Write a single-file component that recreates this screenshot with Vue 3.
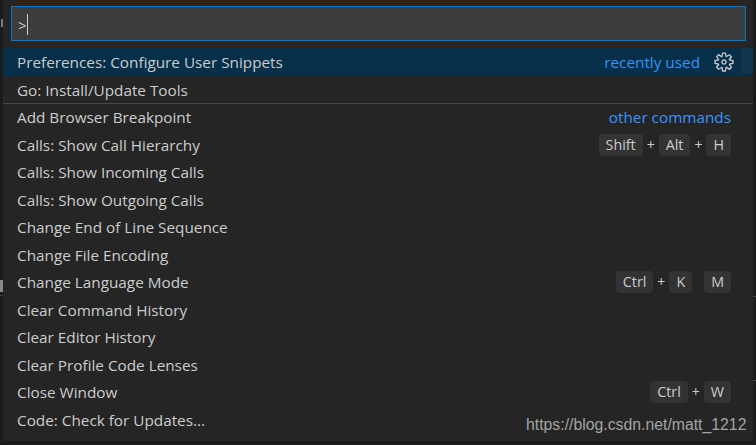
<script setup>
const rows = [
  { t: 'Preferences: Configure User Snippets', active: true, label: 'recently used', gear: true },
  { t: 'Go: Install/Update Tools' },
  { t: 'Add Browser Breakpoint', sep: true, label: 'other commands' },
  { t: 'Calls: Show Call Hierarchy', keys: [['Shift', 'Alt', 'H']] },
  { t: 'Calls: Show Incoming Calls' },
  { t: 'Calls: Show Outgoing Calls' },
  { t: 'Change End of Line Sequence' },
  { t: 'Change File Encoding' },
  { t: 'Change Language Mode', keys: [['Ctrl', 'K'], ['M']] },
  { t: 'Clear Command History' },
  { t: 'Clear Editor History' },
  { t: 'Clear Profile Code Lenses' },
  { t: 'Close Window', keys: [['Ctrl', 'W']] },
  { t: 'Code: Check for Updates...' }
]
</script>

<template>
  <div class="page">
    <i class="edge edge-a"></i>
    <i class="edge edge-c"></i>
    <i class="edge edge-d"></i>
    <i class="edge edge-e"></i>
    <i class="edge edge-f"></i>
    <div class="panel">
      <div class="head">
        <div class="input"><span class="prompt">&gt;</span><span class="caret"></span></div>
      </div>
      <div class="list">
        <div v-for="r in rows" :key="r.t" class="row" :class="{ active: r.active, sep: r.sep }">
          <span class="title">{{ r.t }}</span>
          <span v-if="r.label" class="label">{{ r.label }}</span>
          <svg v-if="r.gear" class="gear" viewBox="0 0 16 16" width="22" height="22">
            <path fill="#c5c5c5" fill-rule="evenodd" d="M9.1 4.4L8.6 2H7.4l-.5 2.4-.7.3-2-1.3-.9.8 1.3 2-.2.7-2.4.5v1.2l2.4.5.3.8-1.3 2 .8.8 2-1.3.8.3.4 2.3h1.2l.5-2.4.8-.3 2 1.3.8-.8-1.3-2 .3-.8 2.3-.4V7.4l-2.4-.5-.3-.8 1.3-2-.8-.8-2 1.3-.7-.2zM9.4 1l.5 2.4L12 2.1l2 2-1.4 2.1 2.4.4v2.8l-2.4.5L14 12l-2 2-2.1-1.4-.5 2.4H6.6l-.5-2.4L4 13.9l-2-2 1.4-2.1L1 9.4V6.6l2.4-.5L2.1 4l2-2 2.1 1.4.4-2.4h2.8zm.6 7c0 1.1-.9 2-2 2s-2-.9-2-2 .9-2 2-2 2 .9 2 2zM8 9c.6 0 1-.4 1-1s-.4-1-1-1-1 .4-1 1 .4 1 1 1z"/>
          </svg>
          <div v-if="r.keys" class="chords">
            <div v-for="(c, i) in r.keys" :key="i" class="chord">
              <template v-for="(k, j) in c" :key="k">
                <span v-if="j > 0" class="plus">+</span>
                <kbd class="key">{{ k }}</kbd>
              </template>
            </div>
          </div>
        </div>
      </div>
      <i class="slider"></i>
    </div>
    <span class="mark">https://blog.csdn.net/matt_1212</span>
  </div>
</template>

<style>
html, body { margin: 0; background: #1a1a1a; overflow: hidden; }
</style>

<style scoped>
.page {
  position: relative;
  width: 756px;
  height: 445px;
  padding-left: 3px;
  box-sizing: border-box;
  background: #1b1b1b;
  overflow: hidden;
  font-family: "Open Sans", "Noto Sans", sans-serif;
}
.panel {
  position: relative;
  width: 750px;
  height: 441px;
  background: #252526;
  color: #cccccc;
}
.head { padding: 6px 7px 7px 8px; }
.input {
  height: 35px;
  box-sizing: border-box;
  border: 1px solid #0a78c8;
  background: #3c3c3c;
  display: flex;
  align-items: center;
  padding-left: 6px;
}
.prompt { font-size: 15px; line-height: 20px; color: #c8c8c8; margin-top: 3px; }
.caret { width: 1px; height: 21px; background: #cfcfcf; margin-top: 1px; }
.list { display: flex; flex-direction: column; }
.row {
  height: 27.5px;
  box-sizing: border-box;
  display: flex;
  align-items: center;
  padding: 0.5px 22px 0 14px;
  font-size: 15.3px;
  white-space: nowrap;
}
.row.active { background: #062f4a; height: 28px; margin-bottom: -0.5px; padding-top: 0; }
.row.sep { position: relative; }
.row.sep::before {
  content: "";
  position: absolute;
  left: 0;
  right: 0;
  top: 0;
  height: 1px;
  background: #454545;
}
.title { flex: 1; }
.label { color: #3794ff; }
.gear { margin: 0 -3.5px 0 12.5px; }
.chords { display: flex; gap: 12px; }
.chord { display: flex; align-items: center; }
.plus { width: 16px; text-align: center; font-size: 14px; line-height: 22px; }
.key {
  height: 22px;
  padding: 0 7px;
  display: block;
  border-radius: 4px;
  background: #333334;
  font-family: inherit;
  font-size: 14.3px;
  line-height: 22px;
  text-align: center;
  color: #cccccc;
}
.slider {
  position: absolute;
  left: 738px;
  top: 48px;
  width: 12px;
  height: 25px;
  background: rgba(121, 121, 121, 0.1);
}
.edge { position: absolute; left: 0; width: 3px; }
.edge-a { top: 19px; height: 8px; background: #7a7a72; left: 1px; width: 2px; }
.edge-c { top: 280px; height: 12px; background: #8a8a8a; }
.edge-d { top: 295px; height: 1px; background: #444; }
.edge-e { top: 296px; height: 1px; left: 753px; background: #444; }
.edge-f { top: 380px; height: 1px; left: 753px; background: #444; }
.mark {
  position: absolute;
  left: 526px;
  top: 415px;
  font-family: "Liberation Sans", Arial, sans-serif;
  font-size: 15.8px;
  line-height: 20px;
  color: #a3a3a3;
  white-space: nowrap;
}
</style>
